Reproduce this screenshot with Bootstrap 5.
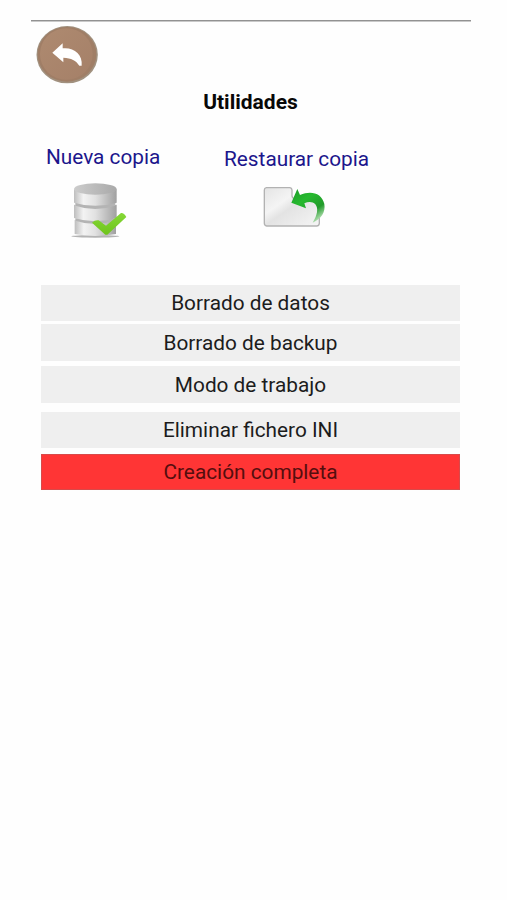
<!DOCTYPE html>
<html lang="es">
<head>
<meta charset="utf-8">
<meta name="viewport" content="width=device-width, initial-scale=1">
<title>Utilidades</title>
<link href="https://cdn.jsdelivr.net/npm/bootstrap@5.3.0/dist/css/bootstrap.min.css" rel="stylesheet">
<style>
body{font-family:Roboto,"Liberation Sans",sans-serif;font-size:20.8px;line-height:26px;color:#1c1c1c;background:#fefefe}
.screen{width:507px;padding-top:20px}
.rule{height:2px;margin:0 36px 0 31px;background:linear-gradient(#929292 50%,#c9c9c9 50%)}
.back{margin:3px 0 0 35px;width:65px;height:60px}
.title{width:439px;margin:4px 0 0 31px;font-size:21px;line-height:26px;color:#080808}
.copies{height:141px;padding:29px 0 0 46px}
.copy{color:#1c168c}
.copy-new{width:178px}
.copy-restore{padding-top:2px}
.copy svg{display:block}
.icon-new{margin:10px 0 0 24px}
.icon-restore{margin:14px 0 0 36px}
.options{margin:29px 47px 0 41px}
.option{height:36px;background:#efefef;color:inherit;font-size:20.8px;line-height:26px}
.option.tall{height:37px}
.option:nth-child(2){margin-top:3px}
.option:nth-child(3){margin-top:5px}
.option:nth-child(4){margin-top:9px}
.option:nth-child(5){margin-top:6px}
.option-full{background:#ff3535;color:#550e0e;box-shadow:inset 0 0 0 1px #d84a4a}
</style>
</head>
<body>
<main class="screen">
  <div class="rule"></div>
  <button class="btn p-0 border-0 d-block back" aria-label="Volver">
    <svg class="d-block" width="65" height="60" viewBox="45 45 195 180">
      <defs><linearGradient id="disc" x2="1" y2="1"><stop stop-color="#ae8a70"/><stop offset="1" stop-color="#a58068"/></linearGradient></defs>
      <ellipse cx="141.500" cy="134" rx="92" ry="86" fill="#a1917f"/>
      <ellipse cx="141" cy="133" rx="88" ry="82" fill="#a07e66"/>
      <ellipse cx="139" cy="132" rx="79" ry="77" fill="url(#disc)"/>
      <path d="M97 128L128 100V115C160 111 189 132 185 167H178C168 151 154 144 130 143V157Z" fill="#fff"/>
    </svg>
  </button>
  <h1 class="title text-center fw-bold">Utilidades</h1>
  <section class="d-flex align-items-start copies">
    <div class="copy copy-new"><div class="text-nowrap">Nueva copia</div>
      <svg class="icon-new" width="60" height="60" viewBox="30 30 180 180">
        <defs>
          <linearGradient id="metal"><stop stop-color="#bebebe"/><stop offset=".22" stop-color="#f3f3f3"/><stop offset=".5" stop-color="#e1e1e1"/><stop offset="1" stop-color="#a0a0a0"/></linearGradient>
          <linearGradient id="lid"><stop stop-color="#ccc"/><stop offset="1" stop-color="#a9a9a9"/></linearGradient>
          <linearGradient id="tick" y2="1" x2="0"><stop stop-color="#85d836"/><stop offset="1" stop-color="#6fc41c"/></linearGradient>
        </defs>
        <ellipse cx="106" cy="199" rx="72" ry="4" fill="#999" opacity=".75"/>
        <path d="M44 150Q106 172 168 150V192Q106 204 44 192Z" fill="url(#metal)"/>
        <path d="M46 145V152Q106 172 166 152V145Z" fill="#b4b4b4"/>
        <path d="M42 104Q106 124 170 104V144Q106 164 42 144Z" fill="url(#metal)"/>
        <path d="M46 98V107Q106 127 166 107V98Z" fill="#b4b4b4"/>
        <path d="M42 58Q106 78 170 58V98Q106 117 42 98Z" fill="url(#metal)"/>
        <ellipse cx="106" cy="57" rx="64" ry="17" fill="url(#lid)"/>
        <path d="M96 158Q105 149 116 151L138 167L183 129Q192 128 199 141L142 194H136Z" fill="url(#tick)"/>
      </svg>
    </div>
    <div class="copy copy-restore"><div class="text-nowrap">Restaurar copia</div>
      <svg class="icon-restore" width="70" height="44" viewBox="30 48 210 132">
        <defs>
          <linearGradient id="folder" x2="1" y2="1"><stop stop-color="#e4e4e4"/><stop offset=".35" stop-color="#f4f4f4"/><stop offset=".5" stop-color="#e3e3e3"/><stop offset="1" stop-color="#f5f5f5"/></linearGradient>
          <linearGradient id="arrow" x2=".7" y2="1"><stop stop-color="#1a9c27"/><stop offset=".4" stop-color="#27b92f"/><stop offset=".75" stop-color="#219b2a"/><stop offset="1" stop-color="#b4dfb3"/></linearGradient>
        </defs>
        <path d="M49 53H119Q125 53 126 60V78Q127 86 136 86H201Q208 87 208 94V160Q207 168 200 168H50Q43 167 43 160V60Q43 54 49 53Z" fill="url(#folder)" stroke="#b2b2b2" stroke-width="4"/>
        <path d="M124 98L142 57L150 75C184 60 216 70 223 102C227 127 214 146 188 158C202 136 206 115 196 103C188 94 175 94 163 100L168 115Z" fill="url(#arrow)"/>
      </svg>
    </div>
  </section>
  <div class="d-flex flex-column options">
    <button class="btn rounded-0 border-0 p-0 option">Borrado de datos</button>
    <button class="btn rounded-0 border-0 p-0 option tall">Borrado de backup</button>
    <button class="btn rounded-0 border-0 p-0 option tall">Modo de trabajo</button>
    <button class="btn rounded-0 border-0 p-0 option">Eliminar fichero INI</button>
    <button class="btn rounded-0 border-0 p-0 option option-full">Creación completa</button>
  </div>
</main>
<script src="https://cdn.jsdelivr.net/npm/bootstrap@5.3.0/dist/js/bootstrap.bundle.min.js"></script>
</body>
</html>
